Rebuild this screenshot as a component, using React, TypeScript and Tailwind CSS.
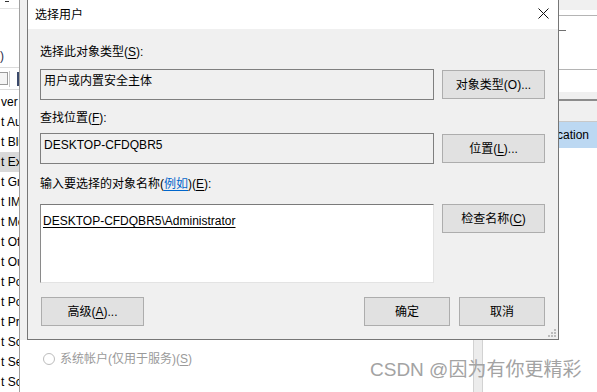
import type { ReactNode } from "react";

const font = "font-['Liberation_Sans','Noto_Sans_CJK_SC',sans-serif]";

const listRows = [
  "ver Manager",
  "t Audio",
  "t Bluetooth",
  "t Exchange",
  "t Graphics",
  "t IME",
  "t Media",
  "t Office",
  "t Outlook",
  "t Power",
  "t PowerShell",
  "t Print",
  "t Script",
  "t Security",
  "t Scheduler",
];

function Button({ children, className = "" }: { children: ReactNode; className?: string }) {
  return (
    <button
      type="button"
      className={`flex h-[29px] items-center justify-center border border-[#adadad] bg-[#e1e1e1] text-[12px] text-black ${className}`}
    >
      {children}
    </button>
  );
}

function U({ children }: { children: ReactNode }) {
  return <span className="underline underline-offset-2">{children}</span>;
}

function LeftPane() {
  return (
    <div className="flex w-[20px] shrink-0 flex-col overflow-hidden border-r border-[#a0a0a0] bg-white text-[12px] leading-[20px] text-black">
      <div className="flex h-[10px] items-start border-b border-[#e3e3e3]">
        <div className="ml-[5px] mt-[1px] h-px w-[4px] bg-[#333]" />
      </div>
      <div className="flex h-[61px] items-start pt-[37px] text-[#2b2b4a]">)</div>
      <div className="flex h-[26px] items-center gap-[1px] border-y border-[#dcdcdc]">
        <div className="h-[13px] w-[8px] border border-l-0 border-[#9a9a9a] bg-[#f4f4f4]" />
        <div className="h-[16px] w-px bg-[#c8c8c8]" />
        <div className="ml-auto h-[14px] w-[2px] bg-[#3b4a6b]" />
      </div>
      <div className="h-[2px]" />
      {listRows.map((row, i) => (
        <div
          key={i}
          className={`h-[20px] whitespace-nowrap pl-[1px] ${i === 3 ? "bg-[#d9d9d9]" : ""}`}
        >
          {row}
        </div>
      ))}
    </div>
  );
}

function RightPane() {
  return (
    <div className="flex w-[39px] shrink-0 flex-col overflow-hidden bg-white text-[12px] text-black">
      <div className="h-[10px] bg-[#f0f0f0]" />
      <div className="h-[5px]" />
      <div className="h-px bg-[#b4b4b4]" />
      <div className="flex h-[53px] flex-col">
        <div className="mt-[14px] h-px w-[8px] bg-[#707070]" />
      </div>
      <div className="h-px bg-[#b4b4b4]" />
      <div className="h-[22px]" />
      <div className="h-[7px] bg-[#f0f0f0]" />
      <div className="h-[2px] bg-[#8c8c8c]" />
      <div className="h-[20px] bg-[#f0f0f0]" />
      <div className="h-px bg-[#c8c8c8]" />
      <div className="flex h-[26px] items-center whitespace-nowrap bg-[#bcd8f2] pl-0">
        <span className="-ml-[1px]">cation</span>
      </div>
      <div className="flex-1" />
    </div>
  );
}

function Dialog() {
  return (
    <div className="absolute left-[27px] top-[-1px] flex h-[341px] w-[532px] flex-col border border-[#767676] bg-[#f0f0f0] text-[12px] leading-[16px] text-black">
      <div className="flex h-[29px] shrink-0 items-center justify-between bg-white pl-[7px] pr-[9px]">
        <span>选择用户</span>
        <svg width="11" height="11" viewBox="0 0 11 11" className="mb-[2px]">
          <path d="M0.5 0.5L10.5 10.5M10.5 0.5L0.5 10.5" stroke="#111" strokeWidth="1" fill="none" />
        </svg>
      </div>

      <div className="flex flex-col px-[12px]">
        <div className="mt-[15px]">
          选择此对象类型(<U>S</U>):
        </div>
        <div className="mt-[9px] flex items-center gap-2">
          <div className="h-[31px] w-[394px] border border-[#7f7f7f] bg-[#f0f0f0] pl-[3px] pt-[3px]">
            用户或内置安全主体
          </div>
          <Button className="w-[103px]">对象类型(O)...</Button>
        </div>

        <div className="mt-[10px]">
          查找位置(<U>F</U>):
        </div>
        <div className="mt-[7px] flex items-center gap-2">
          <div className="h-[31px] w-[394px] border border-[#7f7f7f] bg-[#f0f0f0] pl-[3px] pt-[3px]">
            DESKTOP-CFDQBR5
          </div>
          <Button className="w-[103px]">
            位置(<U>L</U>)...
          </Button>
        </div>

        <div className="mt-[12px]">
          输入要选择的对象名称(<span className="text-[#0066cc] underline underline-offset-2">例如</span>)(<U>E</U>):
        </div>
        <div className="mt-[12px] flex items-start gap-2">
          <div className="h-[79px] w-[394px] border border-b-[#e3e3e3] border-l-[#8a8a8a] border-r-[#e3e3e3] border-t-[#7a7a7a] bg-white pl-[2px] pt-[8px]">
            <span className="underline underline-offset-2">DESKTOP-CFDQBR5\Administrator</span>
          </div>
          <Button className="w-[103px]">
            检查名称(<U>C</U>)
          </Button>
        </div>

        <div className="mt-[14px] flex items-center">
          <Button className="ml-px w-[103px]">
            高级(<U>A</U>)...
          </Button>
          <Button className="ml-auto w-[86px]">确定</Button>
          <Button className="ml-[9px] mr-px w-[86px]">取消</Button>
        </div>
      </div>

      <svg width="8" height="8" viewBox="0 0 8 8" className="absolute bottom-[2px] right-[2px]">
        <rect x="6" y="0" width="2" height="2" fill="#bcbcbc" />
        <rect x="3" y="3" width="2" height="2" fill="#bcbcbc" />
        <rect x="6" y="3" width="2" height="2" fill="#bcbcbc" />
        <rect x="0" y="6" width="2" height="2" fill="#bcbcbc" />
        <rect x="3" y="6" width="2" height="2" fill="#bcbcbc" />
        <rect x="6" y="6" width="2" height="2" fill="#bcbcbc" />
      </svg>
    </div>
  );
}

export default function App() {
  return (
    <div className={`relative flex h-[392px] w-[597px] overflow-hidden bg-white ${font}`}>
      <LeftPane />

      <div className="flex flex-1 flex-col">
        <div className="flex h-[340px] shrink-0">
          <div className="w-[7px] bg-[#f0f0f0]" />
          <div className="flex-1" />
          <RightPane />
        </div>
        <div className="grid flex-1 grid-cols-[453px_10px_1fr]">
          <div className="flex items-start pl-[23px] pt-[11px]">
            <div className="flex items-center gap-[5px] text-[12px] leading-[16px] text-[#9a9a9a]">
              <span className="h-[12px] w-[12px] rounded-full border border-[#bcbcbc] bg-white" />
              <span>
                系统帐户(仅用于服务)(<U>S</U>)
              </span>
            </div>
          </div>
          <div className="border-x border-[#d2d2d2] bg-[#ececec]" />
          <div />
        </div>
      </div>

      <Dialog />

      <div className="absolute left-[370px] top-[358px] text-[19px] leading-[24px] text-[#a3a3a3]">
        CSDN @因为有你更精彩
      </div>
    </div>
  );
}
